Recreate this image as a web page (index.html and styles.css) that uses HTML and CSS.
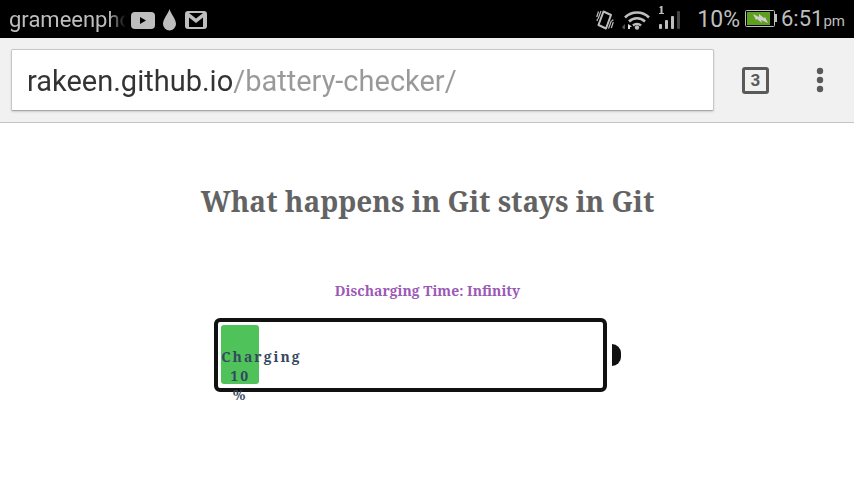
FILE: index.html
```html
<!DOCTYPE html>
<html lang="en">
<head>
<meta charset="utf-8">
<meta name="viewport" content="width=device-width, initial-scale=1">
<title>Battery checker</title>
<link rel="stylesheet" href="styles.css">
</head>
<body>
<div class="status">
  <span class="carrier">grameenpho</span>
  <svg class="ic-video" width="24" height="17" viewBox="0 0 24 17"><rect width="24" height="17" rx="4" fill="#bebebe"/><path d="M9 5v7l6-3.500z" fill="#000"/></svg>
  <svg class="ic-drop" width="15" height="22" viewBox="0 0 15 22"><path d="M7.500 0C6 5 1 10 1 15a6.500 6.500 0 0 0 13 0C14 10 9 5 7.500 0z" fill="#bebebe"/></svg>
  <svg class="ic-mail" width="22" height="18" viewBox="0 0 22 18"><rect x="1" y="1" width="20" height="16" rx="2" fill="none" stroke="#bebebe" stroke-width="2"/><path d="M1 2h3l7 5.500L18 2h3v15h-3V6.500l-7 5.500-7-5.500V17H1z" fill="#bebebe"/></svg>
  <span class="spacer"></span>
  <svg class="ic-vibrate" width="18" height="20" viewBox="0 0 18 20" fill="none" stroke="#bebebe"><path d="M7.500 1.500l7.500 3.500-5 13.500-7.500-3.500z" stroke-width="2" stroke-linejoin="round"/><path d="M2.500 1.500L.7 7M5 1L2 9M1.500 9L1 11M15.500 10.500l-3 8M17.300 12l-2 6M17 9.500l-.5 1.500" stroke-width="1.200"/></svg>
  <svg class="ic-wifi" width="28" height="20" viewBox="0 0 28 20"><g fill="none" stroke="#bebebe" stroke-width="2.600"><path d="M3 7.500a17 17 0 0 1 24 0"/><path d="M7 11.500a11.500 11.500 0 0 1 16 0"/><path d="M11 15.500a6 6 0 0 1 8 0"/></g><circle cx="15" cy="17.500" r="2.200" fill="#bebebe"/><path d="M3 14v5H1.500l-1.500-2z" fill="#555"/><path d="M6 14l4 2.500-2 .5v2H6z" fill="#ddd"/></svg>
  <svg class="ic-signal" width="22" height="24" viewBox="0 0 22 24"><path d="M0 1.500L2 0h1.500v7H5v1H0V7h1.500V2z" fill="#bebebe"/><rect y="18" width="3" height="5" rx="1" fill="#bebebe"/><rect x="6" y="14" width="3" height="9" rx="1" fill="#bebebe"/><rect x="12" y="10" width="3" height="13" rx="1" fill="#bebebe"/><rect x="18" y="5" width="3" height="18" rx="1" fill="#444"/></svg>
  <span class="level">10%</span>
  <svg class="ic-battery" width="32" height="18" viewBox="0 0 32 18"><rect x=".5" y=".5" width="29" height="16" rx="1" fill="none" stroke="#bebebe"/><path d="M30 4h2v8h-2z" fill="#bebebe"/><path d="M2 2h23v13H2z" fill="#5f9f20"/><path d="M8 4l6 3V4l5 4 1-1 3 6-7-3 1 3-5-4-1 1z" fill="#d0d0d0"/></svg>
  <span class="clock">6:51<small>pm</small></span>
</div>
<header class="toolbar">
  <input class="url" type="text" aria-label="Address" value="rakeen.github.io/battery-checker/" spellcheck="false">
  <button class="tabs" type="button" aria-label="Open tabs">3</button>
  <button class="menu" type="button" aria-label="Menu"><svg width="8" height="26" viewBox="0 0 8 26" fill="#5a5a5a"><circle cx="4" cy="4" r="3.200"/><circle cx="4" cy="13" r="3.200"/><circle cx="4" cy="22" r="3.200"/></svg></button>
</header>
<main>
  <h1>What happens in Git stays in Git</h1>
  <p class="time">Discharging Time: Infinity</p>
  <div class="battery">
    <div class="case"><div class="fill" style="width:10%">Charging 10 %</div></div>
    <div class="tip"></div>
  </div>
</main>
</body>
</html>
```
FILE: styles.css
```css
* { box-sizing: border-box; }
body {
  min-height: 100vh;
  margin: 0;
  background: #fff;
  font-family: "Noto Serif", "Droid Serif", "DejaVu Serif Condensed", serif;
}
svg { display: block; flex: none; }

.status {
  display: flex;
  align-items: center;
  height: 38px;
  padding: 2px 9px 0;
  background: #000;
  color: #bebebe;
  font: 23px/36px Roboto, sans-serif;
}
.carrier {
  width: 117px;
  overflow: hidden;
  white-space: nowrap;
  font-size: 22px;
  mask-image: linear-gradient(to right, #000 85%, transparent);
}
.ic-video { margin-left: 5px; }
.ic-drop { margin-left: 7px; }
.ic-mail { margin-left: 8px; }
.spacer { flex: 1; }
.ic-wifi { margin-left: 8px; }
.ic-signal { margin: 0 16px 4px 9px; }
.ic-battery { margin: 0 4px 2px 5px; }
.clock { font-size: 22px; }
.clock small { font-size: 15px; }

.toolbar {
  display: flex;
  align-items: center;
  height: 85px;
  padding: 0 18px 0 11px;
  background: #f1f1f1;
  border-bottom: 1px solid #c4c4c4;
}
.url {
  flex: 1;
  min-width: 0;
  height: 62px;
  padding: 2px 15px 0;
  border: 1px solid #c6c6c6;
  border-bottom-color: #a8a8a8;
  border-radius: 2px;
  box-shadow: 0 1px 2px #ccc;
  color: transparent;
  background:
    linear-gradient(to right, #333 221px, #999 221px) text,
    #fff;
  font: 29px/58px Roboto, sans-serif;
}
.tabs {
  width: 27px;
  height: 27px;
  margin: 0 35px 0 28px;
  padding: 0;
  border: 3px solid #5a5a5a;
  border-radius: 3px;
  background: none;
  color: #5a5a5a;
  font: bold 17px/20px Roboto, sans-serif;
}
.menu {
  display: flex;
  justify-content: center;
  width: 32px;
  padding: 0;
  border: 0;
  background: none;
}

main { padding: 56px 0 0 1px; }
h1 {
  margin: 0;
  color: #636363;
  font-size: 28px;
  line-height: 44px;
  text-align: center;
}
.time {
  margin: 57px 0 16px;
  color: #9b59b6;
  font-size: 14px;
  font-weight: bold;
  line-height: 22px;
  text-align: center;
}
.battery {
  display: flex;
  align-items: center;
  gap: 5px;
  width: 50%;
  margin: 0 auto;
}
.case {
  width: 92%;
  height: 74px;
  padding: 3px;
  border: 4px solid #111;
  border-radius: 6px;
}
.fill {
  height: 59px;
  padding-top: 22px;
  border-radius: 3px;
  background: #4fc25a;
  color: #34495e;
  font-size: 14px;
  font-weight: bold;
  line-height: 19px;
  letter-spacing: 2px;
  text-align: center;
}
.tip {
  width: 9px;
  height: 22px;
  border-radius: 0 9px 9px 0;
  background: #111;
}
```
